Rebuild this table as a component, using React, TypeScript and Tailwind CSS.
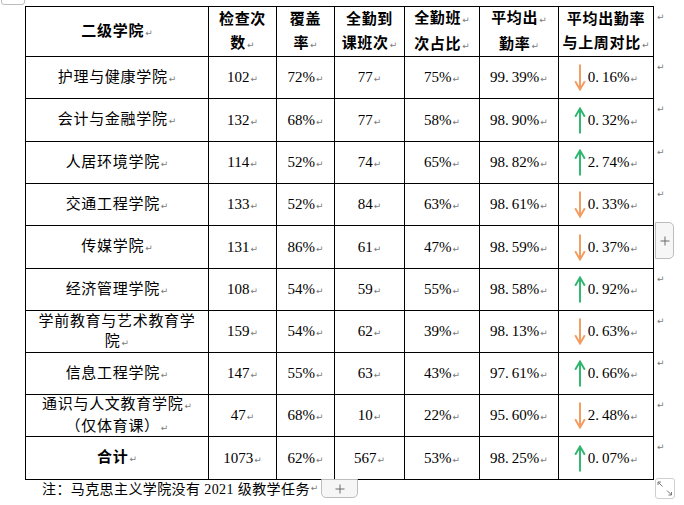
import React from "react";

type Row = {
  name: React.ReactNode;
  a: string;
  b: string;
  c: string;
  d: string;
  e: string;
  up: boolean;
  f: string;
  bold?: boolean;
};

const rows: Row[] = [
  { name: "护理与健康学院", a: "102", b: "72%", c: "77", d: "75%", e: "99.39%", up: false, f: "0.16%" },
  { name: "会计与金融学院", a: "132", b: "68%", c: "77", d: "58%", e: "98.90%", up: true, f: "0.32%" },
  { name: "人居环境学院", a: "114", b: "52%", c: "74", d: "65%", e: "98.82%", up: true, f: "2.74%" },
  { name: "交通工程学院", a: "133", b: "52%", c: "84", d: "63%", e: "98.61%", up: false, f: "0.33%" },
  { name: "传媒学院", a: "131", b: "86%", c: "61", d: "47%", e: "98.59%", up: false, f: "0.37%" },
  { name: "经济管理学院", a: "108", b: "54%", c: "59", d: "55%", e: "98.58%", up: true, f: "0.92%" },
  {
    name: (
      <>
        学前教育与艺术教育学
        <br />院
      </>
    ),
    a: "159", b: "54%", c: "62", d: "39%", e: "98.13%", up: false, f: "0.63%",
  },
  { name: "信息工程学院", a: "147", b: "55%", c: "63", d: "43%", e: "97.61%", up: true, f: "0.66%" },
  {
    name: (
      <>
        通识与人文教育学院<Mark />
        <br />（仅体育课）
      </>
    ),
    a: "47", b: "68%", c: "10", d: "22%", e: "95.60%", up: false, f: "2.48%",
  },
  { name: "合计", a: "1073", b: "62%", c: "567", d: "53%", e: "98.25%", up: true, f: "0.07%", bold: true },
];

function Mark() {
  return (
    <span className="font-['DejaVu_Sans',sans-serif] text-[9px] font-normal tracking-normal text-[#7a7a7a] ml-[1px] align-baseline">
      ↵
    </span>
  );
}

function Pct({ v }: { v: string }) {
  const i = v.indexOf(".");
  if (i < 0) return <>{v}</>;
  return (
    <>
      {v.slice(0, i + 1)}
      <span className="inline-block w-[3px]" />
      {v.slice(i + 1)}
    </>
  );
}

function Arrow({ up }: { up: boolean }) {
  return up ? (
    <svg width="12" height="27" viewBox="0 0 12 27" className="shrink-0">
      <path d="M6 26.5 V2 M1.2 9.8 L6 1.5 L10.8 9.8" stroke="#2db56e" strokeWidth="1.9" fill="none" />
    </svg>
  ) : (
    <svg width="12" height="27" viewBox="0 0 12 27" className="shrink-0">
      <path d="M6 0.5 V25 M1.2 17.2 L6 25.5 L10.8 17.2" stroke="#f39a5c" strokeWidth="1.9" fill="none" />
    </svg>
  );
}

const cell = "bg-white flex items-center justify-center text-center";
const hdr = "bg-white flex items-center justify-center text-center font-bold leading-[24px] tracking-[0.7px]";

export default function App() {
  return (
    <div className="relative w-[684px] h-[505px] overflow-hidden bg-white text-black font-['Liberation_Serif','Noto_Sans_CJK_SC',serif] text-[15px]">
      <div className="pt-[6px] pl-[25px]">
        <div className="flex">
          <div className="grid w-max bg-black gap-px p-px grid-cols-[182px_67px_57px_69px_74px_78px_94px] grid-rows-[49px_41px_42px_41px_41px_42px_41px_41px_41px_41px_42px]">
            <div className={hdr}>
              <span>
                二级学院<Mark />
              </span>
            </div>
            <div className={hdr}>
              <span>
                检查次
                <br />数<Mark />
              </span>
            </div>
            <div className={hdr}>
              <span>
                覆盖
                <br />率<Mark />
              </span>
            </div>
            <div className={hdr}>
              <span>
                全勤到
                <br />课班次<Mark />
              </span>
            </div>
            <div className={hdr}>
              <span>
                全勤班<Mark />
                <br />次占比<Mark />
              </span>
            </div>
            <div className={hdr}>
              <span>
                平均出<Mark />
                <br />勤率<Mark />
              </span>
            </div>
            <div className={hdr}>
              <span>
                平均出勤率
                <br />与上周对比<Mark />
              </span>
            </div>
            {rows.map((r, idx) => (
              <React.Fragment key={idx}>
                <div className={`${cell} leading-[20px] tracking-[0.7px] ${r.bold ? "font-bold" : ""}`}>
                  <span>
                    {r.name}
                    {idx === 8 ? null : null}
                    <Mark />
                  </span>
                </div>
                <div className={cell}>
                  <span>
                    {r.a}
                    <Mark />
                  </span>
                </div>
                <div className={cell}>
                  <span>
                    {r.b}
                    <Mark />
                  </span>
                </div>
                <div className={cell}>
                  <span>
                    {r.c}
                    <Mark />
                  </span>
                </div>
                <div className={cell}>
                  <span>
                    {r.d}
                    <Mark />
                  </span>
                </div>
                <div className={cell}>
                  <span>
                    <Pct v={r.e} />
                    <Mark />
                  </span>
                </div>
                <div className={`${cell} gap-[2px]`}>
                  <Arrow up={r.up} />
                  <span>
                    <Pct v={r.f} />
                    <Mark />
                  </span>
                </div>
              </React.Fragment>
            ))}
          </div>
          <div className="flex flex-col w-[20px] pl-[2px]">
            {[50, 42, 43, 42, 42, 43, 42, 42, 42, 42, 43].map((h, i) => (
              <div
                key={i}
                className={`pt-[3px] leading-[12px] ${
                  h === 50 ? "h-[50px]" : h === 43 ? "h-[43px]" : "h-[42px]"
                }`}
              >
                <Mark />
              </div>
            ))}
          </div>
        </div>
        <div className="h-[18px] flex items-center pl-[17px] text-[14px] tracking-[0.4px] font-['Liberation_Serif','Noto_Sans_CJK_SC',serif]">
          注：马克思主义学院没有 2021 级教学任务<Mark />
        </div>
      </div>

      {/* top-left table move handle */}
      <div className="absolute left-[1px] top-[-12px] w-[24px] h-[17px] border border-[#bdbdbd] rounded-[3px] bg-white" />

      {/* right insert-column button */}
      <div className="absolute left-[655px] top-[222px] w-[19px] h-[37px] border border-[#bdbdbd] rounded-r-[5px] bg-[#f6f6f6] flex items-center justify-center">
        <svg width="10" height="10" viewBox="0 0 10 10">
          <path d="M5 0.5 V9.5 M0.5 5 H9.5" stroke="#6b6b6b" strokeWidth="1" />
        </svg>
      </div>

      {/* bottom insert-row button */}
      <div className="absolute left-[321px] top-[479px] w-[37px] h-[19px] border border-[#bdbdbd] rounded-b-[5px] bg-[#f6f6f6] flex items-center justify-center">
        <svg width="10" height="10" viewBox="0 0 10 10">
          <path d="M5 0.5 V9.5 M0.5 5 H9.5" stroke="#6b6b6b" strokeWidth="1" />
        </svg>
      </div>

      {/* resize handle */}
      <div className="absolute left-[655px] top-[478px] w-[20px] h-[21px] border border-[#cfcfcf] rounded-[3px] bg-white">
        <svg width="18" height="19" viewBox="0 0 18 19">
          <path d="M2 3 L6.5 7.5 M2 3 H5 M2 3 V6" stroke="#7a7a7a" strokeWidth="1" fill="none" />
          <path d="M15.5 16 L11 11.5 M15.5 16 H12.5 M15.5 16 V13" stroke="#7a7a7a" strokeWidth="1" fill="none" />
        </svg>
      </div>
    </div>
  );
}
